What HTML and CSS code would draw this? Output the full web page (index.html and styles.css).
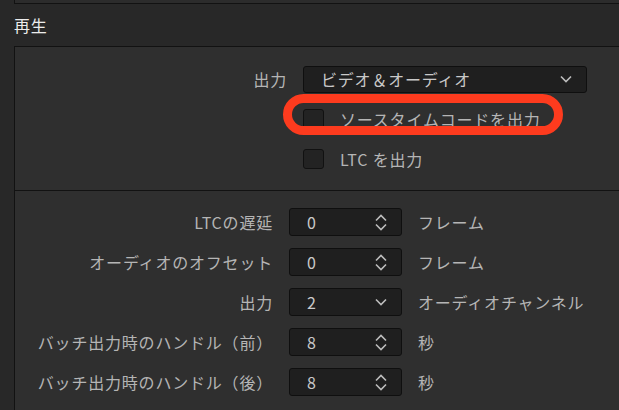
FILE: index.html
```html
<!DOCTYPE html>
<html lang="ja">
<head>
    <meta charset="UTF-8">
    <title>再生</title>
    <link rel="stylesheet" href="styles.css">
</head>
<body>
    <div class="prev-box"></div>
    <div class="section-title">再生</div>
    <div class="panel">
        <div class="group group-out">
            <div class="row">
                <label class="label">出力</label>
                <div class="select wide">
                    <span>ビデオ＆オーディオ</span>
                    <svg class="chev" width="12" height="8" viewBox="0 0 12 8"><path d="M1 1.5 L6 6.5 L11 1.5" fill="none" stroke="#bdbdbd" stroke-width="1.6"/></svg>
                </div>
            </div>
            <div class="row marked">
                <span class="label"></span>
                <span class="check"></span>
                <span class="check-text">ソースタイムコードを出力</span>
                <span class="ring"></span>
            </div>
            <div class="row">
                <span class="label"></span>
                <span class="check"></span>
                <span class="check-text">LTC を出力</span>
            </div>
        </div>
        <div class="group group-time">
            <div class="row">
                <label class="label">LTCの遅延</label>
                <div class="select spin">
                    <span>0</span>
                    <svg width="12" height="17" viewBox="0 0 12 17"><path d="M1 6.5 L6 1.5 L11 6.5 M1 10.5 L6 15.5 L11 10.5" fill="none" stroke="#bdbdbd" stroke-width="1.6"/></svg>
                </div>
                <span class="unit">フレーム</span>
            </div>
            <div class="row">
                <label class="label">オーディオのオフセット</label>
                <div class="select spin">
                    <span>0</span>
                    <svg width="12" height="17" viewBox="0 0 12 17"><path d="M1 6.5 L6 1.5 L11 6.5 M1 10.5 L6 15.5 L11 10.5" fill="none" stroke="#bdbdbd" stroke-width="1.6"/></svg>
                </div>
                <span class="unit">フレーム</span>
            </div>
            <div class="row">
                <label class="label">出力</label>
                <div class="select spin">
                    <span>2</span>
                    <svg class="chev" width="12" height="8" viewBox="0 0 12 8"><path d="M1 1.5 L6 6.5 L11 1.5" fill="none" stroke="#bdbdbd" stroke-width="1.6"/></svg>
                </div>
                <span class="unit">オーディオチャンネル</span>
            </div>
            <div class="row">
                <label class="label">バッチ出力時のハンドル（前）</label>
                <div class="select spin">
                    <span>8</span>
                    <svg width="12" height="17" viewBox="0 0 12 17"><path d="M1 6.5 L6 1.5 L11 6.5 M1 10.5 L6 15.5 L11 10.5" fill="none" stroke="#bdbdbd" stroke-width="1.6"/></svg>
                </div>
                <span class="unit">秒</span>
            </div>
            <div class="row">
                <label class="label">バッチ出力時のハンドル（後）</label>
                <div class="select spin">
                    <span>8</span>
                    <svg width="12" height="17" viewBox="0 0 12 17"><path d="M1 6.5 L6 1.5 L11 6.5 M1 10.5 L6 15.5 L11 10.5" fill="none" stroke="#bdbdbd" stroke-width="1.6"/></svg>
                </div>
                <span class="unit">秒</span>
            </div>
        </div>
    </div>
</body>
</html>
```

FILE: styles.css
```css
html, body {
    height: 100%;
    overflow: hidden;
}

body {
    margin: 0;
    display: flex;
    flex-direction: column;
    background-color: #282828;
    font-family: "Noto Sans CJK JP", "Noto Sans", sans-serif;
    font-size: 16px;
    letter-spacing: 0.8px;
    color: #b5b5b5;
}

.prev-box {
    margin-left: 14px;
    height: 3px;
    flex-shrink: 0;
    background-color: #2c2c2c;
    border-left: 1px solid #121212;
    border-bottom: 1px solid #121212;
}

.section-title {
    height: 42px;
    flex-shrink: 0;
    padding-left: 14px;
    line-height: 42px;
    color: #ececec;
}

.panel {
    flex: 1;
    margin-left: 14px;
    background-color: #2f2f2f;
    border-top: 1px solid #121212;
    border-left: 1px solid #121212;
}

.group-out {
    padding: 12px 0 11px;
}

.group-time {
    border-top: 1px solid #121212;
    padding-top: 11px;
}

.row {
    display: flex;
    align-items: center;
    height: 40px;
}

.label {
    width: 272px;
    margin-right: 16px;
    text-align: right;
    flex-shrink: 0;
    white-space: nowrap;
}

.group-time .label {
    width: 258px;
}

.select {
    display: flex;
    align-items: center;
    justify-content: space-between;
    box-sizing: border-box;
    height: 27px;
    padding: 0 14px 0 17px;
    background-color: #1f1f1f;
    border: 1px solid #0f0f0f;
    border-radius: 3px;
    color: #c9c9c9;
}

.select.wide {
    width: 284px;
}

.select.spin {
    width: 113px;
    height: 28px;
}

.unit {
    margin-left: 16px;
}

.check {
    width: 21px;
    height: 20px;
    box-sizing: border-box;
    background-color: #232323;
    border: 1px solid #111;
    border-radius: 3px;
    margin-right: 16px;
}

.marked {
    position: relative;
}

.ring {
    position: absolute;
    left: 268px;
    top: -5px;
    width: 280px;
    height: 41px;
    box-sizing: border-box;
    border: 9px solid #fd3b1e;
    border-radius: 21px;
}
```
